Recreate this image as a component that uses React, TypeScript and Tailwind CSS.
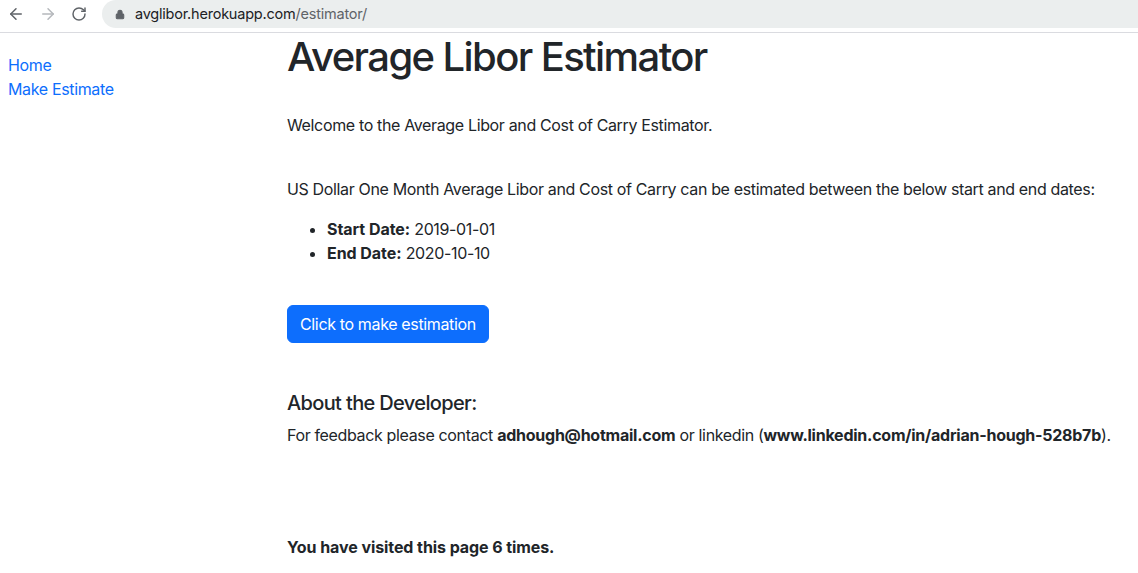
import { ArrowLeft, ArrowRight, RotateCw, Lock } from 'lucide-react'

const font = { fontFamily: 'Inter, "Noto Sans", sans-serif' }

function BrowserBar() {
    return (
        <div className="flex h-[33px] items-start border-b border-[#dadbe0] bg-white">
            <div className="flex h-[28px] items-center gap-[14px] pl-[7px] pr-[15px]">
                <ArrowLeft className="h-[18px] w-[18px] text-[#5f6368]" strokeWidth={2} />
                <ArrowRight className="h-[18px] w-[18px] text-[#b5b8bc]" strokeWidth={2} />
                <RotateCw className="h-[16px] w-[16px] text-[#5f6368]" strokeWidth={2.2} />
            </div>
            <div className="flex h-[28px] flex-1 items-center rounded-bl-[14px] rounded-tl-[14px] bg-[#ebeeee] pl-[13px]">
                <Lock className="h-[11px] w-[10px] fill-[#5f6368] text-[#5f6368]" strokeWidth={2.5} />
                <span className="ml-[10px] text-[14.5px] tracking-[-0.015em] text-[#202124]" style={font}>
                    avglibor.herokuapp.com<span className="text-[#5f6368]">/estimator/</span>
                </span>
            </div>
        </div>
    )
}

export default function App() {
    return (
        <div className="min-h-[573px] bg-white text-[16px] leading-[24px] tracking-[-0.022em] text-[#212529]" style={font}>
            <BrowserBar />
            <div className="flex">
                <nav className="flex w-[287px] flex-col pl-[8px] pt-[20px]">
                    <a href="#" className="text-[#0d6efd]">Home</a>
                    <a href="#" className="text-[#0d6efd]">Make Estimate</a>
                </nav>
                <main className="flex-1">
                    <h1 className="mb-[32px] text-[40px] font-medium leading-[48px] tracking-[-0.04em]">Average Libor Estimator</h1>
                    <p className="mb-[40px]">Welcome to the Average Libor and Cost of Carry Estimator.</p>
                    <p className="mb-[16px]">
                        US Dollar One Month Average Libor and Cost of Carry can be estimated between the below start and end dates:
                    </p>
                    <ul className="mb-[40px] list-disc pl-[40px]">
                        <li><b className="font-bold tracking-[-0.003em]">Start Date:</b> 2019-01-01</li>
                        <li><b className="font-bold tracking-[-0.003em]">End Date:</b> 2020-10-10</li>
                    </ul>
                    <button className="rounded-[6px] border border-[#0d6efd] bg-[#0d6efd] px-[12px] py-[6px] text-white">
                        Click to make estimation
                    </button>
                    <h5 className="mb-[8px] mt-[48px] text-[20px] font-medium leading-[24px] tracking-[-0.032em]">About the Developer:</h5>
                    <p className="whitespace-nowrap">
                        For feedback please contact <b className="font-bold tracking-[-0.015em]">adhough@hotmail.com</b> or linkedin (<b className="font-bold tracking-[-0.015em]">www.linkedin.com/in/adrian-hough-528b7b</b>).
                    </p>
                    <p className="mt-[88px] font-bold tracking-[-0.005em]">You have visited this page 6 times.</p>
                </main>
            </div>
        </div>
    )
}
